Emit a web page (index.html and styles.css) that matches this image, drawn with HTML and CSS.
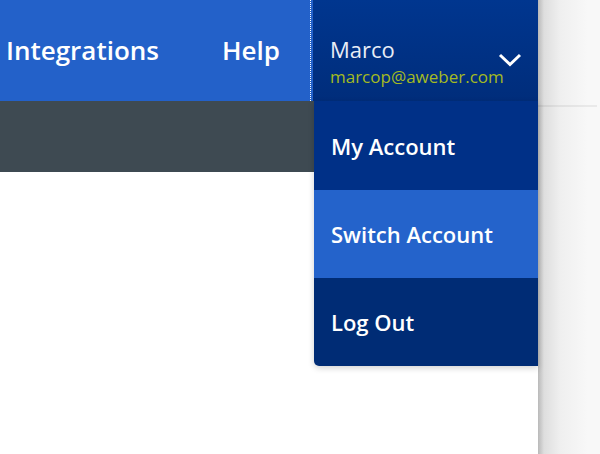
FILE: index.html
```html
<!DOCTYPE html>
<html lang="en">
<head>
    <meta charset="UTF-8">
    <meta name="viewport" content="width=device-width, initial-scale=1.0">
    <title>Account Menu</title>
    <link rel="stylesheet" href="styles.css">
</head>
<body>
    <div class="page">
        <div class="app">
            <div class="topnav">
                <a class="nav-link first" href="#">Integrations</a>
                <a class="nav-link" href="#">Help</a>

                <div class="user-menu">
                    <div class="user-toggle">
                        <div class="user-info">
                            <div class="user-name">Marco</div>
                            <div class="user-email">marcop@aweber.com</div>
                        </div>
                        <svg class="chevron" width="24" height="14" viewBox="0 0 24 14">
                            <path d="M2 2 L12 11.5 L22 2" fill="none" stroke="#fff" stroke-width="3"/>
                        </svg>
                    </div>

                    <!-- open dropdown -->
                    <div class="dropdown">
                        <a class="dropdown-item" href="#">My Account</a>
                        <a class="dropdown-item active" href="#">Switch Account</a>
                        <a class="dropdown-item last" href="#">Log Out</a>
                    </div>
                </div>
            </div>
            <div class="subbar"></div>
            <div class="content"></div>
        </div>

        <div class="side">
            <div class="side-rule"></div>
        </div>
    </div>
</body>
</html>
```

FILE: styles.css
```css
body {
    font-family: "Open Sans", Arial, sans-serif;
    margin: 0;
    padding: 0;
    background-color: #fff;
}

.page {
    display: flex;
    width: 600px;
    height: 454px;
    overflow: hidden;
}

.app {
    width: 538px;
    flex-shrink: 0;
    display: flex;
    flex-direction: column;
}

.topnav {
    height: 101px;
    background-color: #2361c9;
    display: flex;
    align-items: stretch;
}

.nav-link {
    color: #fff;
    text-decoration: none;
    font-size: 26px;
    font-weight: 600;
    padding: 0 32px 2px;
    display: flex;
    align-items: center;
    white-space: nowrap;
}

.nav-link.first {
    margin-left: -26px;
}

.nav-link + .nav-link {
    padding-left: 31px;
    padding-right: 30px;
}

.user-menu {
    position: relative;
    flex: 1;
    min-width: 0;
    border-left: 1px dotted #fff;
    padding-left: 2px;
    background-color: #2361c9;
}

.user-toggle {
    height: 101px;
    background: linear-gradient(#00368f, #002d7b);
    display: flex;
    align-items: flex-start;
    padding: 37px 16px 0 17px;
    box-sizing: border-box;
}

.user-info {
    flex: 1;
    min-width: 0;
    white-space: nowrap;
}

.user-name {
    color: #e8edf6;
    font-size: 22px;
    line-height: 25px;
}

.user-email {
    color: #a4bb22;
    font-size: 17px;
    line-height: 23px;
    margin-top: 3px;
}

.chevron {
    flex-shrink: 0;
    margin-top: 16px;
}

/* dropdown list sits over the page below the nav */
.dropdown {
    position: absolute;
    top: 101px;
    left: 3px;
    right: 0;
    display: flex;
    flex-direction: column;
    border-bottom-left-radius: 5px;
    box-shadow: 0 2px 6px rgba(0, 0, 0, 0.18);
    overflow: hidden;
    z-index: 2;
}

.dropdown-item {
    height: 88px;
    display: flex;
    align-items: center;
    padding-left: 17px;
    color: #fff;
    text-decoration: none;
    font-size: 22px;
    font-weight: 600;
    background-color: #003087;
}

.dropdown-item:first-child {
    height: 89px;
}

.dropdown-item.active {
    background-color: #2463cb;
}

.dropdown-item.last {
    background-color: #002c75;
}

.subbar {
    height: 71px;
    background-color: #3e4a52;
}

.content {
    flex: 1;
    background-color: #fff;
}

.side {
    flex: 1;
    background: linear-gradient(to right, #b9b9b9, #dedede 6px, #efefef 22px, #f8f8f8 50px);
}

.side-rule {
    margin-top: 105px;
    margin-right: 3px;
    height: 2px;
    background-color: rgba(0, 0, 0, 0.06);
}
```
